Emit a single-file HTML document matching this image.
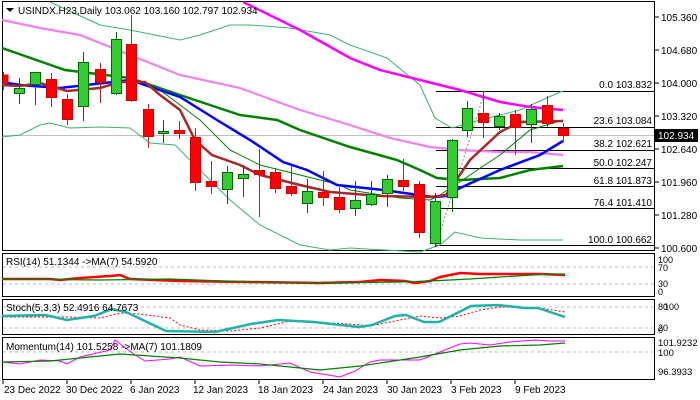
<!DOCTYPE html>
<html><head><meta charset="utf-8"><style>
html,body{margin:0;padding:0;background:#fff;}
svg{display:block;font-family:"Liberation Sans",sans-serif;}
text{font-size:10px;fill:#000;}
</style></head><body>
<svg width="700" height="400" viewBox="0 0 700 400" xmlns="http://www.w3.org/2000/svg">
<rect x="0" y="0" width="700" height="400" fill="#fff"/>
<rect x="2.5" y="1.5" width="652" height="249" fill="none" stroke="#000"/>
<rect x="2.5" y="253.5" width="652" height="43" fill="none" stroke="#000"/>
<rect x="2.5" y="299.5" width="652" height="35" fill="none" stroke="#000"/>
<rect x="2.5" y="337.5" width="652" height="42" fill="none" stroke="#000"/>
<line x1="3" y1="135.5" x2="654" y2="135.5" stroke="#c0c0c0"/>
<g stroke="#000" stroke-width="1">
<line x1="436" y1="91.5" x2="654" y2="91.5"/>
<line x1="436" y1="127.5" x2="654" y2="127.5"/>
<line x1="436" y1="150.5" x2="654" y2="150.5"/>
<line x1="436" y1="168.5" x2="654" y2="168.5"/>
<line x1="436" y1="186.5" x2="654" y2="186.5"/>
<line x1="436" y1="208.5" x2="654" y2="208.5"/>
<line x1="436" y1="245.5" x2="654" y2="245.5"/>
</g>
<g text-anchor="end">
<text x="652" y="88">0.0 103.832</text>
<text x="652" y="124">23.6 103.084</text>
<text x="652" y="147">38.2 102.621</text>
<text x="652" y="166">50.0 102.247</text>
<text x="652" y="184">61.8 101.873</text>
<text x="652" y="206">76.4 101.410</text>
<text x="652" y="243">100.0 100.662</text>
</g>
<line x1="436" y1="245" x2="485" y2="91" stroke="#888" stroke-dasharray="2,2"/>
<g fill="none">
<polyline stroke="#3CB371" stroke-width="1" points="50,2 100,25 130,30 180,40 200,35 230,25 250,25 290,28 330,35 350,45 387,58 420,85 435,118 452,128 480,120 520,110 560,92 563,91"/>
<polyline stroke="#3CB371" stroke-width="1" points="2,137 20,135 40,125 50,123 70,128 100,127 130,128 150,143 175,145 200,170 230,200 260,225 300,245 330,250 350,248 420,252 440,245 455,232 480,238 520,240 563,240"/>
<polyline stroke="#EE82EE" stroke-width="2.2" points="2,20 40,28 80,35 130,55 180,75 240,88 300,110 350,125 390,138 430,147 460,150 500,152 530,152 563,155"/>
<polyline stroke="#FF00FF" stroke-width="2.5" points="243,2 300,30 350,58 380,70 420,80 460,90 500,102 530,107 563,110"/>
<polyline stroke="#008000" stroke-width="2.5" points="2,48 65,70 130,78 180,95 240,115 277,120 300,130 350,147 397,160 420,170 437,178 460,180 500,178 530,170 563,166"/>
<polyline stroke="#008000" stroke-width="1" points="130,80 160,90 180,105 200,120 230,150 260,165 300,175 340,185 350,190 400,198 430,200 440,195 470,175 500,155 530,130 563,120"/>
<polyline stroke="#0000FF" stroke-width="2.5" points="2,82 20,85 60,88 130,80 180,97 217,120 250,140 283,162 307,170 337,185 383,190 433,197 446,196 460,188 500,170 540,155 563,141"/>
<polyline stroke="#A52A2A" stroke-width="2.5" points="2,85 20,86 40,83 67,91 100,88 120,82 145,82 160,95 180,110 195,140 212,155 240,165 260,175 300,185 330,192 380,196 430,197 446,195 470,160 500,132 520,122 563,121"/>
</g>
<g stroke-width="1">
<line x1="3.5" y1="72" x2="3.5" y2="90" stroke="#A52A2A"/><rect x="3" y="75" width="5" height="8" fill="#f00" stroke="#f00"/>
<line x1="19.5" y1="78" x2="19.5" y2="104" stroke="#006400"/><rect x="14.5" y="88.5" width="10" height="5" fill="#32CD32" stroke="#006400"/>
<line x1="35.5" y1="72" x2="35.5" y2="105" stroke="#006400"/><rect x="30.5" y="72.5" width="10" height="12" fill="#32CD32" stroke="#006400"/>
<line x1="51.5" y1="73" x2="51.5" y2="107" stroke="#A52A2A"/><rect x="46.5" y="79.5" width="10" height="18" fill="#f00" stroke="#c00"/>
<line x1="67.5" y1="94" x2="67.5" y2="125" stroke="#A52A2A"/><rect x="62.5" y="99.5" width="10" height="20" fill="#f00" stroke="#c00"/>
<line x1="83.5" y1="52" x2="83.5" y2="121" stroke="#006400"/><rect x="78.5" y="62.5" width="10" height="44" fill="#32CD32" stroke="#006400"/>
<line x1="100.5" y1="63" x2="100.5" y2="103" stroke="#A52A2A"/><rect x="95.5" y="69.5" width="10" height="13" fill="#f00" stroke="#c00"/>
<line x1="116.5" y1="32" x2="116.5" y2="95" stroke="#006400"/><rect x="111.5" y="39.5" width="10" height="54" fill="#32CD32" stroke="#006400"/>
<line x1="131.5" y1="15" x2="131.5" y2="102" stroke="#A52A2A"/><rect x="126.5" y="44.5" width="10" height="56" fill="#f00" stroke="#c00"/>
<line x1="148.5" y1="104" x2="148.5" y2="148" stroke="#A52A2A"/><rect x="143.5" y="109.5" width="10" height="27" fill="#f00" stroke="#c00"/>
<line x1="163.5" y1="120" x2="163.5" y2="143" stroke="#006400"/><rect x="158.5" y="131.5" width="10" height="2" fill="#32CD32" stroke="#006400"/>
<line x1="179.5" y1="121" x2="179.5" y2="139" stroke="#A52A2A"/><rect x="174.5" y="130.5" width="10" height="3" fill="#f00" stroke="#c00"/>
<line x1="195.5" y1="128" x2="195.5" y2="191" stroke="#A52A2A"/><rect x="190.5" y="137.5" width="10" height="45" fill="#f00" stroke="#c00"/>
<line x1="211.5" y1="161" x2="211.5" y2="194" stroke="#A52A2A"/><rect x="206.5" y="181.5" width="10" height="5" fill="#f00" stroke="#c00"/>
<line x1="227.5" y1="166" x2="227.5" y2="204" stroke="#006400"/><rect x="222.5" y="172.5" width="10" height="17" fill="#32CD32" stroke="#006400"/>
<line x1="243.5" y1="165" x2="243.5" y2="197" stroke="#006400"/><rect x="238.5" y="174.5" width="10" height="4" fill="#32CD32" stroke="#006400"/>
<line x1="259.5" y1="149" x2="259.5" y2="217" stroke="#A52A2A"/><rect x="254.5" y="170.5" width="10" height="4" fill="#f00" stroke="#c00"/>
<line x1="275.5" y1="168" x2="275.5" y2="193" stroke="#A52A2A"/><rect x="270.5" y="172.5" width="10" height="16" fill="#f00" stroke="#c00"/>
<line x1="291.5" y1="165" x2="291.5" y2="196" stroke="#A52A2A"/><rect x="286.5" y="186.5" width="10" height="7" fill="#f00" stroke="#c00"/>
<line x1="307.5" y1="179" x2="307.5" y2="213" stroke="#006400"/><rect x="302.5" y="191.5" width="10" height="12" fill="#32CD32" stroke="#006400"/>
<line x1="323.5" y1="171" x2="323.5" y2="206" stroke="#A52A2A"/><rect x="318.5" y="192.5" width="10" height="5" fill="#f00" stroke="#c00"/>
<line x1="339.5" y1="187" x2="339.5" y2="213" stroke="#A52A2A"/><rect x="334.5" y="197.5" width="10" height="12" fill="#f00" stroke="#c00"/>
<line x1="355.5" y1="181" x2="355.5" y2="216" stroke="#006400"/><rect x="350.5" y="200.5" width="10" height="8" fill="#32CD32" stroke="#006400"/>
<line x1="371.5" y1="181" x2="371.5" y2="206" stroke="#006400"/><rect x="366.5" y="194.5" width="10" height="10" fill="#32CD32" stroke="#006400"/>
<line x1="387.5" y1="175" x2="387.5" y2="207" stroke="#006400"/><rect x="382.5" y="179.5" width="10" height="14" fill="#32CD32" stroke="#006400"/>
<line x1="403.5" y1="159" x2="403.5" y2="191" stroke="#A52A2A"/><rect x="398.5" y="180.5" width="10" height="6" fill="#f00" stroke="#c00"/>
<line x1="419.5" y1="181" x2="419.5" y2="238" stroke="#A52A2A"/><rect x="414.5" y="184.5" width="10" height="48" fill="#f00" stroke="#c00"/>
<line x1="435.5" y1="193" x2="435.5" y2="247" stroke="#006400"/><rect x="430.5" y="201.5" width="10" height="42" fill="#32CD32" stroke="#006400"/>
<line x1="452.5" y1="139" x2="452.5" y2="212" stroke="#006400"/><rect x="447.5" y="140.5" width="10" height="57" fill="#32CD32" stroke="#006400"/>
<line x1="467.5" y1="101" x2="467.5" y2="137" stroke="#006400"/><rect x="462.5" y="108.5" width="10" height="22" fill="#32CD32" stroke="#006400"/>
<line x1="483.5" y1="91" x2="483.5" y2="138" stroke="#A52A2A"/><rect x="478.5" y="113.5" width="10" height="9" fill="#f00" stroke="#c00"/>
<line x1="499.5" y1="113" x2="499.5" y2="130" stroke="#006400"/><rect x="494.5" y="116.5" width="10" height="10" fill="#32CD32" stroke="#006400"/>
<line x1="515.5" y1="110" x2="515.5" y2="155" stroke="#A52A2A"/><rect x="510.5" y="114.5" width="10" height="13" fill="#f00" stroke="#c00"/>
<line x1="531.5" y1="104" x2="531.5" y2="143" stroke="#006400"/><rect x="526.5" y="109.5" width="10" height="15" fill="#32CD32" stroke="#006400"/>
<line x1="547.5" y1="96" x2="547.5" y2="127" stroke="#A52A2A"/><rect x="542.5" y="105.5" width="10" height="18" fill="#f00" stroke="#c00"/>
<line x1="563.5" y1="123" x2="563.5" y2="142" stroke="#A52A2A"/><rect x="558.5" y="128.5" width="10" height="7" fill="#f00" stroke="#c00"/>
</g>
<path d="M6 8 L14 8 L10 12 Z" fill="#000"/>
<text x="18" y="14">USINDX.H23,Daily  103.062 103.160 102.797 102.934</text>
<g>
<line x1="655" y1="17" x2="659" y2="17" stroke="#000"/><text x="661" y="21">105.360</text>
<line x1="655" y1="50" x2="659" y2="50" stroke="#000"/><text x="661" y="54">104.680</text>
<line x1="655" y1="83" x2="659" y2="83" stroke="#000"/><text x="661" y="87">104.000</text>
<line x1="655" y1="116" x2="659" y2="116" stroke="#000"/><text x="661" y="120">103.320</text>
<line x1="655" y1="149" x2="659" y2="149" stroke="#000"/><text x="661" y="153">102.640</text>
<line x1="655" y1="182" x2="659" y2="182" stroke="#000"/><text x="661" y="186">101.960</text>
<line x1="655" y1="215" x2="659" y2="215" stroke="#000"/><text x="661" y="219">101.280</text>
<line x1="655" y1="248" x2="659" y2="248" stroke="#000"/><text x="661" y="252">100.600</text>
</g>
<rect x="655" y="129" width="43" height="13" fill="#000"/>
<text x="658" y="139" style="fill:#fff">102.934</text>
<g stroke="#bbb" stroke-dasharray="3,3"><line x1="3" y1="267" x2="654" y2="267"/><line x1="3" y1="284" x2="654" y2="284"/></g>
<polyline fill="none" stroke="#f00" stroke-width="2.5" points="2,279 50,279 60,280 80,278 110,276 120,275 130,279 180,281 250,282 320,283 360,282 380,280 405,281 415,283 430,281 440,277 460,273 480,274 540,274 565,275"/>
<polyline fill="none" stroke="#008000" stroke-width="1.2" points="2,279 100,280 170,279 250,282 330,283 400,282 430,281 470,279 500,277 550,274 565,274"/>
<text x="6" y="265">RSI(14) 51.1344  -&gt;MA(7) 54.5920</text>
<text x="658" y="263" style="font-size:9px">100</text><text x="658" y="271" style="font-size:9px">70</text><text x="658" y="287" style="font-size:9px">30</text><text x="658" y="295" style="font-size:9px">0</text>
<g stroke="#bbb" stroke-dasharray="3,3"><line x1="3" y1="307" x2="654" y2="307"/><line x1="3" y1="328" x2="654" y2="328"/></g>
<polyline fill="none" stroke="#f00" stroke-width="1" stroke-dasharray="2,2" points="2,317 67,317 100,318 120,313 140,314 170,318 180,325 200,330 230,331 260,328 290,321 350,324 370,326 400,320 420,316 440,318 460,316 480,310 500,307 540,308 565,312"/>
<polyline fill="none" stroke="#20B2AA" stroke-width="2.5" points="2,316 45,315 67,320 94,316 112,309 126,312 166,331 215,332 251,324 278,320 314,322 359,327 372,325 395,316 406,315 424,322 439,322 471,306 498,305 525,308 538,308 565,317"/>
<text x="6" y="311">Stoch(5,3,3) 52.4916 64.7673</text>
<text x="658" y="310" style="font-size:9px">80</text><text x="664" y="310" style="font-size:9px">100</text>
<text x="658" y="331" style="font-size:9px">20</text><text x="658" y="333" style="font-size:9px">0</text>
<line x1="3" y1="352" x2="654" y2="352" stroke="#bbb" stroke-dasharray="3,3"/>
<polyline fill="none" stroke="#FF00FF" stroke-width="1" points="2,362 20,364 40,360 60,361 67,364 80,357 110,350 115,340 135,355 145,361 170,359 180,357 200,366 230,365 260,366 290,363 310,372 340,377 355,371 370,362 380,360 420,360 440,352 460,344 470,343 490,345 510,342 535,340 550,341 565,341"/>
<polyline fill="none" stroke="#008000" stroke-width="1.2" points="2,362 50,361 120,354 150,356 180,358 220,362 260,364 320,370 360,366 420,357 460,350 500,346 540,345 565,343"/>
<text x="6" y="350">Momentum(14) 101.5258  -&gt;MA(7) 101.1809</text>
<text x="658" y="346" style="font-size:9.5px">101.9232</text>
<text x="658" y="356" style="font-size:9.5px">100</text>
<text x="658" y="375" style="font-size:9.5px">96.3933</text>
<g stroke="#000">
<line x1="3" y1="380" x2="3" y2="384"/><line x1="67" y1="380" x2="67" y2="384"/><line x1="131" y1="380" x2="131" y2="384"/><line x1="195" y1="380" x2="195" y2="384"/><line x1="259" y1="380" x2="259" y2="384"/><line x1="323" y1="380" x2="323" y2="384"/><line x1="387" y1="380" x2="387" y2="384"/><line x1="451" y1="380" x2="451" y2="384"/><line x1="515" y1="380" x2="515" y2="384"/>
</g>
<text x="4" y="393">23 Dec 2022</text>
<text x="66" y="393">30 Dec 2022</text>
<text x="130" y="393">6 Jan 2023</text>
<text x="193" y="393">12 Jan 2023</text>
<text x="258" y="393">18 Jan 2023</text>
<text x="323" y="393">24 Jan 2023</text>
<text x="387" y="393">30 Jan 2023</text>
<text x="451" y="393">3 Feb 2023</text>
<text x="515" y="393">9 Feb 2023</text>
</svg>
</body></html>
